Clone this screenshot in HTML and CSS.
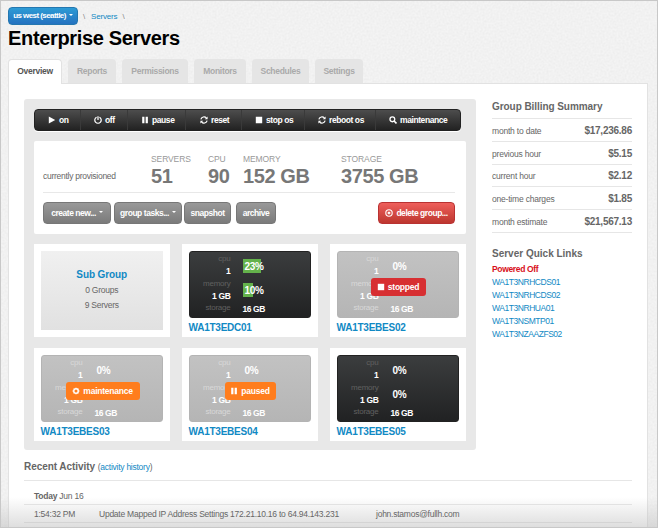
FILE: index.html
```html
<!DOCTYPE html>
<html lang="en">
<head>
<meta charset="utf-8">
<title>Enterprise Servers</title>
<link rel="stylesheet" href="styles.css">
</head>
<body>
<svg class="defs" aria-hidden="true">
  <symbol id="play" viewBox="0 0 10 10"><path d="M1 .5L9 5L1 9.5Z" fill="currentColor"/></symbol>
  <symbol id="power" viewBox="0 0 10 10"><path d="M3.2 1.5A4 4 0 1 0 6.8 1.5M5 .3V5" fill="none" stroke="currentColor" stroke-width="1.5"/></symbol>
  <symbol id="pause" viewBox="0 0 10 10"><path d="M1.5 1H4.3V9H1.5ZM5.8 1H8.6V9H5.8Z" fill="currentColor"/></symbol>
  <symbol id="refresh" viewBox="0 0 10 10"><path d="M1.1 4.3A4 4 0 0 1 8 2.5M8.9 5.7A4 4 0 0 1 2 7.5" fill="none" stroke="currentColor" stroke-width="1.5"/><path d="M9.5 .6V4.1H6ZM.5 9.4V5.9H4Z" fill="currentColor"/></symbol>
  <symbol id="stop" viewBox="0 0 10 10"><path d="M1 1H9V9H1Z" fill="currentColor"/></symbol>
  <symbol id="search" viewBox="0 0 10 10"><circle cx="4.2" cy="4.2" r="3" fill="none" stroke="currentColor" stroke-width="1.6"/><path d="M6.3 6.3L9.3 9.3" stroke="currentColor" stroke-width="2"/></symbol>
  <symbol id="remove" viewBox="0 0 10 10"><circle cx="5" cy="5" r="4" fill="none" stroke="currentColor" stroke-width="1.4"/><path d="M3.5 3.5L6.5 6.5M6.5 3.5L3.5 6.5" stroke="currentColor" stroke-width="1.4"/></symbol>
  <symbol id="gear" viewBox="0 0 10 10"><circle cx="5" cy="5" r="2.8" fill="none" stroke="currentColor" stroke-width="1.8"/><path d="M5 .8V2M5 8V9.2M.8 5H2M8 5H9.2M2 2L3 3M7 7L8 8M8 2L7 3M3 7L2 8" stroke="currentColor" stroke-width="1.6"/></symbol>
  <filter id="grain" x="0" y="0" width="100%" height="100%"><feTurbulence type="fractalNoise" baseFrequency=".5" numOctaves="2"/><feColorMatrix values="0 0 0 0 .5  0 0 0 0 .5  0 0 0 0 .5  .22 0 0 0 -.06"/></filter>
</svg>
<div class="page">
  <svg class="texture" aria-hidden="true"><rect width="100%" height="100%" filter="url(#grain)"/></svg>
  <div class="crumbs"><button class="region">us west (seattle)<i class="caret"></i></button><span class="slash">\</span><a>Servers</a><span class="slash">\</span></div>
  <h1><span>Enterprise Servers</span></h1>
  <nav class="tabs"><a class="active t1">Overview</a><a class="t2">Reports</a><a class="t3">Permissions</a><a class="t4">Monitors</a><a class="t5">Schedules</a><a class="t6">Settings</a></nav>
  <main>
    <div class="columns">
      <section class="group">
        <div class="toolbar">
          <a class="a1"><svg><use href="#play"/></svg><span>on</span></a>
          <a class="a2"><svg><use href="#power"/></svg><span>off</span></a>
          <a class="a3"><svg><use href="#pause"/></svg><span>pause</span></a>
          <a class="a4"><svg><use href="#refresh"/></svg><span>reset</span></a>
          <a class="a5"><svg><use href="#stop"/></svg><span>stop os</span></a>
          <a class="a6"><svg><use href="#refresh"/></svg><span>reboot os</span></a>
          <a class="a7"><svg><use href="#search"/></svg><span>maintenance</span></a>
        </div>
        <div class="summary">
          <div class="stats">
            <span class="prov">currently provisioned</span>
            <div class="stat"><small>SERVERS</small><b>51</b></div>
            <div class="stat"><small>CPU</small><b>90</b></div>
            <div class="stat"><small>MEMORY</small><b>152 GB</b></div>
            <div class="stat"><small>STORAGE</small><b>3755 GB</b></div>
          </div>
          <div class="buttons">
            <button class="b1">create new...<i class="caret"></i></button>
            <button class="b2">group tasks...<i class="caret"></i></button>
            <button class="b3">snapshot</button>
            <button class="b4">archive</button>
            <button class="delete"><svg><use href="#remove"/></svg>delete group...</button>
          </div>
        </div>
        <div class="cards">
          <article class="card"><div class="sub"><h3>Sub Group</h3><p>0 Groups</p><p>9 Servers</p></div></article>
          <article class="card">
            <div class="server"><div class="specs"><small>cpu</small><b>1</b><small>memory</small><b>1 GB</b><small>storage</small></div><div class="usage"><b class="meter"><i style="width:18px"></i><span>23%</span></b><b class="meter"><i style="width:10px"></i><span>10%</span></b><strong>16 GB</strong></div></div>
            <a>WA1T3EDC01</a>
          </article>
          <article class="card">
            <div class="server dim"><div class="specs"><small>cpu</small><b>1</b><small>memory</small><b>1 GB</b><small>storage</small></div><div class="usage"><b class="meter"><span>0%</span></b><b class="meter"></b><strong>16 GB</strong></div><div class="badge stopped"><svg><use href="#stop"/></svg><span>stopped</span></div></div>
            <a>WA1T3EBES02</a>
          </article>
          <article class="card">
            <div class="server dim"><div class="specs"><small>cpu</small><b>1</b><small>memory</small><b>1 GB</b><small>storage</small></div><div class="usage"><b class="meter"><span>0%</span></b><b class="meter"></b><strong>16 GB</strong></div><div class="badge maint"><svg><use href="#gear"/></svg><span>maintenance</span></div></div>
            <a>WA1T3EBES03</a>
          </article>
          <article class="card">
            <div class="server dim"><div class="specs"><small>cpu</small><b>1</b><small>memory</small><b>1 GB</b><small>storage</small></div><div class="usage"><b class="meter"><span>0%</span></b><b class="meter"></b><strong>16 GB</strong></div><div class="badge paused"><svg><use href="#pause"/></svg><span>paused</span></div></div>
            <a>WA1T3EBES04</a>
          </article>
          <article class="card">
            <div class="server"><div class="specs"><small>cpu</small><b>1</b><small>memory</small><b>1 GB</b><small>storage</small></div><div class="usage"><b class="meter"><span>0%</span></b><b class="meter"><span>0%</span></b><strong>16 GB</strong></div></div>
            <a>WA1T3EBES05</a>
          </article>
        </div>
      </section>
      <aside>
        <h2 class="h-bill">Group Billing Summary</h2>
        <dl>
          <div><dt>month to date</dt><dd>$17,236.86</dd></div>
          <div><dt>previous hour</dt><dd>$5.15</dd></div>
          <div><dt>current hour</dt><dd>$2.12</dd></div>
          <div><dt>one-time charges</dt><dd>$1.85</dd></div>
          <div><dt>month estimate</dt><dd>$21,567.13</dd></div>
        </dl>
        <h2 class="h-links">Server Quick Links</h2>
        <ul><li class="off">Powered Off</li><li>WA1T3NRHCDS01</li><li>WA1T3NRHCDS02</li><li>WA1T3NRHUA01</li><li>WA1T3NSMTP01</li><li>WA1T3NZAAZFS02</li></ul>
      </aside>
    </div>
    <section class="activity">
      <h2>Recent Activity <small>(<a>activity history</a>)</small></h2>
      <div class="day"><b>Today</b> Jun 16</div>
      <div class="event"><span class="time">1:54:32 PM</span><span class="what">Update Mapped IP Address Settings 172.21.10.16 to 64.94.143.231</span><span class="who">john.stamos@fullh.com</span></div>
    </section>
  </main>
  <div class="fade"></div>
</div>
</body>
</html>
```
FILE: styles.css
```css
* { box-sizing: border-box; }
body { margin: 0; font: 8.5px/12px "Liberation Sans", Arial, sans-serif; letter-spacing: -.24px; color: #666; }
h1, h2, h3, p, dl, dd, ul { margin: 0; padding: 0; }
ul { list-style: none; }
a { color: #1189c4; }
button { font: inherit; border: 0; padding: 0; color: #fff; }
svg { width: 8px; height: 8px; flex: none; }
.defs { position: absolute; width: 0; height: 0; }
.page { position: relative; z-index: 0; width: 658px; height: 528px; overflow: hidden; border: 1px solid #c8c8c8; background: #f4f4f4; padding: 6px 9px 0 7px; }
.texture { position: absolute; inset: 0; width: 100%; height: 100%; z-index: -1; }
.crumbs { display: flex; height: 18px; align-items: center; font-size: 8px; line-height: 12px; letter-spacing: -.16px; }
.crumbs a, .slash { padding-top: 2px; }
.slash { width: 13px; padding-left: 5px; color: #888; }
.region { display: flex; align-items: center; justify-content: center; width: 70px; height: 18px; border: 1px solid #2477b0; border-radius: 4px; background: linear-gradient(#2d9bd5, #2572c0); font-weight: bold; font-size: 8px; letter-spacing: -.56px; padding-bottom: 1px; }
.caret { border: 2px solid transparent; border-top-color: currentColor; border-bottom: 0; margin: 0 0 2px 3px; }
h1 { height: 34px; font-size: 20px; line-height: 27px; color: #000; letter-spacing: -.34px; }
.tabs { display: flex; height: 24px; font-size: 8.5px; font-weight: bold; position: relative; z-index: 1; }
.tabs a { height: 24px; line-height: 25px; color: #aaa; background: #e5e5e5; border-radius: 4px 4px 0 0; text-align: center; margin-right: 6px; letter-spacing: -.3px; }
.tabs .active { color: #555; background: #fff; border: 1px solid #e2e2e2; border-bottom: 0; height: 25px; line-height: 23px; }
.t1 { width: 54px; } .t2 { width: 48px; } .tabs .t3 { width: 66px; } .t4 { width: 52px; } .t5 { width: 57px; } .t6 { width: 48px; }
main { height: 446px; border: 1px solid #e2e2e2; background: #fff; padding: 15px 15px 0; }
.columns { display: flex; justify-content: space-between; }
.group { width: 452px; height: 351px; background: #e8e8e8; border-radius: 3px; padding: 10px; }
.toolbar { display: flex; width: 427px; height: 22px; border-radius: 4px; background: linear-gradient(#4d4d4d, #222); border: 1px solid #222; box-shadow: 0 1px #fff; font-weight: bold; overflow: hidden; }
.toolbar a { display: flex; align-items: center; color: #fff; gap: 3px; border-right: 1px solid #3a3a3a; letter-spacing: -.42px; }
.toolbar a:last-child { border: 0; }
.a1 { width: 46px; padding-left: 13px; } .a2 { width: 47px; padding-left: 13px; } .a3 { width: 58px; padding-left: 13px; } .a4 { width: 56px; padding-left: 14px; } .a5 { width: 63px; padding-left: 13px; } .a6 { width: 71px; padding-left: 13px; } .a7 { width: 84px; padding-left: 13px; }
.summary { margin-top: 10px; height: 93px; width: 432px; background: #fff; border-radius: 2px; padding: 0 11px 0 9px; }
.stats { display: grid; grid-template-columns: 108px 57px 35px 98px 1fr; height: 52px; border-bottom: 1px solid #e8e8e8; }
.prov { padding-top: 29px; white-space: nowrap; letter-spacing: -.27px; }
.stat small { display: block; margin-top: 12px; font-size: 8.5px; line-height: 12px; color: #999; letter-spacing: -.1px; }
.stat b { display: block; font-size: 20px; line-height: 22px; color: #777; white-space: nowrap; letter-spacing: -.4px; }
.buttons { display: flex; margin-top: 9px; }
.buttons button { display: flex; align-items: center; justify-content: center; height: 22px; border-radius: 4px; border: 1px solid #777; background: linear-gradient(#999, #7b7b7b); font-weight: bold; letter-spacing: -.46px; white-space: nowrap; }
.b1 { width: 68px; margin-right: 3px; } .b2 { width: 68px; margin-right: 2px; } .b3 { width: 47px; margin-right: 5px; } .b4 { width: 40px; }
.buttons .delete { width: 77px; margin-left: auto; gap: 3px; border-color: #b93232; background: linear-gradient(#ee5f5b, #bd362f); }
.cards { display: grid; grid-template-columns: repeat(3, 136px); gap: 11px 12px; width: 432px; margin-top: 10px; }
.card { height: 93px; background: #fff; padding: 7px 7px 7px 6.5px; }
.card > a { display: block; font-size: 10px; font-weight: bold; line-height: 14px; margin-top: 3px; }
.sub { height: 79px; background: linear-gradient(#f0f0f0, #e1e1e1); text-align: center; padding-top: 16px; }
.sub h3 { font-size: 10px; line-height: 15px; color: #1189c4; margin-bottom: 1px; letter-spacing: -.1px; }
.sub p { line-height: 15px; }
.server { position: relative; display: flex; height: 67px; border-radius: 3px; border: 1px solid #222; background: linear-gradient(#3b3d3e, #212223); color: #fff; }
.specs { width: 41px; text-align: right; padding-top: 1px; }
.specs small { display: block; font-size: 8px; line-height: 12px; color: #606060; }
.specs b { display: block; line-height: 13px; height: 12.5px; letter-spacing: -.35px; }
.usage { padding: 7px 0 0 12px; }
.meter { display: block; position: relative; height: 24px; line-height: 15px; font-size: 10px; letter-spacing: -.3px; }
.meter i { position: absolute; left: 0; top: 0; height: 14px; background: #64b24b; }
.meter span { position: relative; left: 2px; }
.usage strong { display: block; line-height: 4px; letter-spacing: -.4px; }
.dim { background: linear-gradient(#c2c2c2, #b5b5b5); border-color: #b4b4b4; }
.dim small { color: #d8d8d8; }
.badge { position: absolute; top: 26px; height: 18px; border-radius: 3px; display: flex; align-items: center; justify-content: center; gap: 3px; font-weight: bold; background: #ff7d1d; }
.stopped { left: 33px; width: 55px; background: #d72f32; } .maint { left: 24px; width: 74px; } .paused { left: 35px; width: 51px; }
aside { width: 140px; }
h2 { font-size: 10px; line-height: 14px; color: #666; white-space: nowrap; letter-spacing: -.06px; }
.h-bill { padding-top: 1px; }
dl { margin-top: 4px; border-top: 1px solid #e6e6e6; }
dl div { display: flex; height: 22.75px; padding-top: 2px; align-items: center; justify-content: space-between; border-bottom: 1px solid #e6e6e6; }
dt { letter-spacing: -.2px; }
dd { font-size: 10px; font-weight: bold; letter-spacing: -.25px; }
.h-links { margin-top: 14px; margin-bottom: 2px; letter-spacing: 0; }
li { line-height: 13px; color: #1189c4; letter-spacing: -.45px; }
.off { color: #d8101b; font-weight: bold; letter-spacing: -.35px; }
.activity h2 { margin-top: 10px; height: 21px; border-bottom: 1px solid #e6e6e6; width: 608px; }
.activity h2 small { font-size: 8.5px; font-weight: normal; letter-spacing: -.25px; }
.day, .event { position: relative; z-index: 3; height: 24px; padding: 9px 10px 0; border-bottom: 1px solid #e2e2e2; width: 608px; }
.event { display: flex; height: 18px; padding-top: 3px; border-color: #d4d4d4; }
.time { width: 65px; } .what { width: 277px; }
.fade { position: absolute; left: 0; right: 0; bottom: 0; height: 30px; background: linear-gradient(rgba(190,190,190,0), rgba(190,190,190,.5)); z-index: 2; }
```
